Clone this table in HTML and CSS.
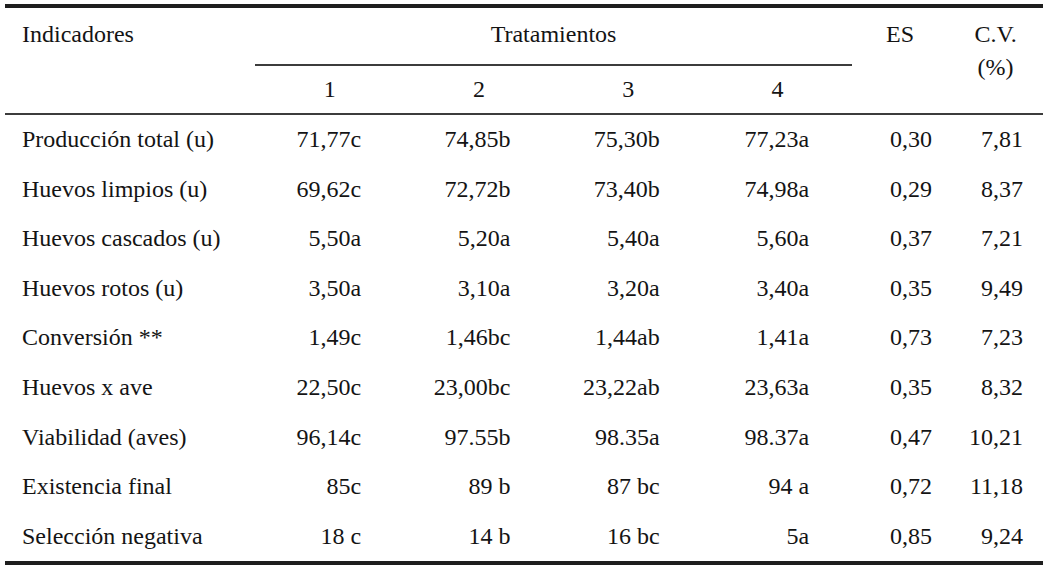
FILE: index.html
```html
<!DOCTYPE html>
<html lang="es">
<head>
<meta charset="utf-8">
<title>Tabla</title>
<link rel="stylesheet" href="styles.css">
</head>
<body>
<table class="data">
  <colgroup>
    <col class="c-ind">
    <col class="c-t"><col class="c-t"><col class="c-t"><col class="c-t">
    <col class="c-es">
    <col class="c-cv">
  </colgroup>
  <thead>
    <tr class="h1">
      <th class="ind" rowspan="2">Indicadores</th>
      <th class="trat" colspan="4">Tratamientos</th>
      <th class="es" rowspan="2">ES</th>
      <th class="cv" rowspan="2">C.V.<br>(%)</th>
    </tr>
    <tr class="h2">
      <th class="num-h">1</th>
      <th class="num-h">2</th>
      <th class="num-h">3</th>
      <th class="num-h">4</th>
    </tr>
  </thead>
  <tbody>
    <tr><td class="ind">Producción total (u)</td><td class="v">71,77c</td><td class="v">74,85b</td><td class="v">75,30b</td><td class="v">77,23a</td><td class="ves">0,30</td><td class="vcv">7,81</td></tr>
    <tr><td class="ind">Huevos limpios (u)</td><td class="v">69,62c</td><td class="v">72,72b</td><td class="v">73,40b</td><td class="v">74,98a</td><td class="ves">0,29</td><td class="vcv">8,37</td></tr>
    <tr><td class="ind">Huevos cascados (u)</td><td class="v">5,50a</td><td class="v">5,20a</td><td class="v">5,40a</td><td class="v">5,60a</td><td class="ves">0,37</td><td class="vcv">7,21</td></tr>
    <tr><td class="ind">Huevos rotos (u)</td><td class="v">3,50a</td><td class="v">3,10a</td><td class="v">3,20a</td><td class="v">3,40a</td><td class="ves">0,35</td><td class="vcv">9,49</td></tr>
    <tr><td class="ind">Conversión **</td><td class="v">1,49c</td><td class="v">1,46bc</td><td class="v">1,44ab</td><td class="v">1,41a</td><td class="ves">0,73</td><td class="vcv">7,23</td></tr>
    <tr><td class="ind">Huevos x ave</td><td class="v">22,50c</td><td class="v">23,00bc</td><td class="v">23,22ab</td><td class="v">23,63a</td><td class="ves">0,35</td><td class="vcv">8,32</td></tr>
    <tr><td class="ind">Viabilidad (aves)</td><td class="v">96,14c</td><td class="v">97.55b</td><td class="v">98.35a</td><td class="v">98.37a</td><td class="ves">0,47</td><td class="vcv">10,21</td></tr>
    <tr><td class="ind">Existencia final</td><td class="v">85c</td><td class="v">89 b</td><td class="v">87 bc</td><td class="v">94 a</td><td class="ves">0,72</td><td class="vcv">11,18</td></tr>
    <tr><td class="ind">Selección negativa</td><td class="v">18 c</td><td class="v">14 b</td><td class="v">16 bc</td><td class="v">5a</td><td class="ves">0,85</td><td class="vcv">9,24</td></tr>
  </tbody>
</table>
</body>
</html>
```

FILE: styles.css
```css
html, body {
  margin: 0;
  padding: 0;
  background: #ffffff;
}

body {
  padding: 4px 0 0 5px;
  font-family: "Liberation Serif", "Times New Roman", serif;
  font-size: 24px;
  color: #141414;
}

.data {
  width: 1038px;
  table-layout: fixed;
  border-collapse: separate;
  border-spacing: 0;
  border-top: 4px solid #1e1e1e;
  border-bottom: 4px solid #1e1e1e;
  line-height: 33px;
}

.c-ind { width: 250px; }
.c-t { width: 149.25px; }
.c-es { width: 96px; }
.c-cv { width: 95px; }

.data th,
.data td {
  padding: 0;
  font-weight: normal;
}

.data thead th {
  border-bottom: 2px solid #3c3c3c;
}

.h1 th {
  vertical-align: top;
  padding-top: 10px;
  height: 46px;
}

.h1 th.ind {
  text-align: left;
  padding-left: 17px;
}

.h1 th.trat {
  text-align: center;
}

.h1 th.es,
.h1 th.cv {
  text-align: center;
}

.h2 th {
  height: 47px;
  text-align: center;
  vertical-align: middle;
}

.data tbody td {
  height: 49.55px;
  vertical-align: middle;
  white-space: nowrap;
}

.data tbody td.ind {
  padding-left: 17px;
  text-align: left;
}

.data tbody td.v {
  text-align: right;
  padding-right: 43px;
}

.data tbody td.ves {
  text-align: right;
  padding-right: 16px;
}

.data tbody td.vcv {
  text-align: right;
  padding-right: 20px;
}
```
